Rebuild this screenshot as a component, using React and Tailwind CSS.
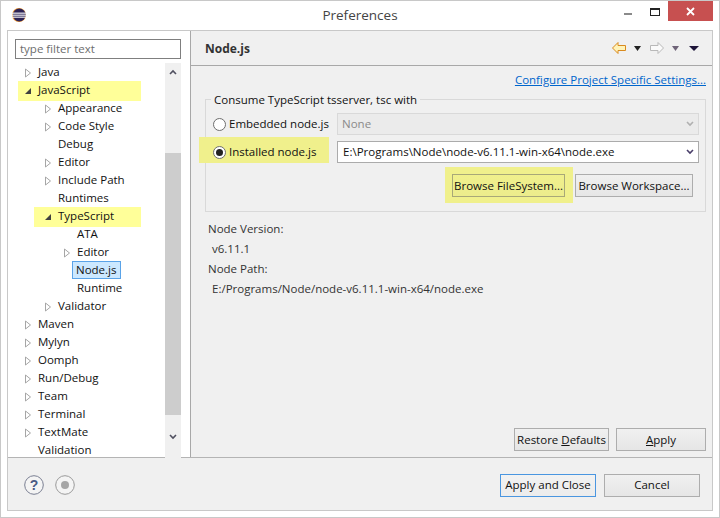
import React from 'react';

const tree = [
  { label: 'Java', depth: 0, arrow: 'closed' },
  { label: 'JavaScript', depth: 0, arrow: 'open', mark: 'w-[123px] left-[10px]' },
  { label: 'Appearance', depth: 1, arrow: 'closed' },
  { label: 'Code Style', depth: 1, arrow: 'closed' },
  { label: 'Debug', depth: 1 },
  { label: 'Editor', depth: 1, arrow: 'closed' },
  { label: 'Include Path', depth: 1, arrow: 'closed' },
  { label: 'Runtimes', depth: 1 },
  { label: 'TypeScript', depth: 1, arrow: 'open', mark: 'w-[107px] left-[26px]' },
  { label: 'ATA', depth: 2 },
  { label: 'Editor', depth: 2, arrow: 'closed' },
  { label: 'Node.js', depth: 2, selected: true },
  { label: 'Runtime', depth: 2 },
  { label: 'Validator', depth: 1, arrow: 'closed' },
  { label: 'Maven', depth: 0, arrow: 'closed' },
  { label: 'Mylyn', depth: 0, arrow: 'closed' },
  { label: 'Oomph', depth: 0, arrow: 'closed' },
  { label: 'Run/Debug', depth: 0, arrow: 'closed' },
  { label: 'Team', depth: 0, arrow: 'closed' },
  { label: 'Terminal', depth: 0, arrow: 'closed' },
  { label: 'TextMate', depth: 0, arrow: 'closed' },
  { label: 'Validation', depth: 0 },
];

const indent = { 0: 'pl-[16px]', 1: 'pl-[36px]', 2: 'pl-[55px]' };

function TreeArrow({ type }) {
  if (type === 'closed') {
    return (
      <svg width="8" height="10" viewBox="0 0 8 10" className="shrink-0">
        <path d="M1.5 1 L6.5 5 L1.5 9 Z" fill="#fff" stroke="#a6a6a6" />
      </svg>
    );
  }
  if (type === 'open') {
    return (
      <svg width="8" height="10" viewBox="0 0 8 10" className="shrink-0">
        <path d="M1 8 L7 8 L7 2 Z" fill="#404040" />
      </svg>
    );
  }
  return <span className="w-2 shrink-0" />;
}

function TreeRow({ item }) {
  return (
    <div className={`relative flex items-center h-[18px] ${indent[item.depth]}`}>
      {item.mark && <span className={`absolute top-[-1px] h-5 bg-[#ffff99] ${item.mark}`} />}
      <span className="relative flex items-center">
        <TreeArrow type={item.arrow} />
      </span>
      <span
        className={
          item.selected
            ? 'relative ml-[1px] h-[18px] pl-[3px] pr-[4px] leading-[16px] bg-[#cce8ff] border border-[#5aa3e8] -translate-y-px'
            : 'relative ml-[6px] leading-[18px] -translate-y-px'
        }
      >
        {item.label}
      </span>
    </div>
  );
}

function Chevron({ up, color = '#505060' }) {
  return (
    <svg width="8" height="6" viewBox="0 0 8 6">
      <path d={up ? 'M1 5 L4 2 L7 5' : 'M1 1 L4 4 L7 1'} fill="none" stroke={color} strokeWidth="1.6" />
    </svg>
  );
}

function EclipseLogo() {
  return (
    <svg width="14" height="14" viewBox="0 0 14 14">
      <circle cx="7" cy="7" r="7" fill="#e8912c" />
      <circle cx="7.3" cy="7" r="6.4" fill="#2c2255" />
      <rect x="0" y="4.6" width="14" height="1.1" fill="#fff" />
      <rect x="0" y="6.6" width="14" height="1.1" fill="#fff" />
      <rect x="0" y="8.6" width="14" height="1.1" fill="#fff" />
    </svg>
  );
}

function NavArrow({ back, disabled }) {
  return (
    <svg width="14" height="12" viewBox="0 0 14 12">
      <path
        d={back ? 'M0.5 6 L6 0.5 V3.5 H13.5 V8.5 H6 V11.5 Z' : 'M13.5 6 L8 0.5 V3.5 H0.5 V8.5 H8 V11.5 Z'}
        fill={disabled ? '#fafafa' : '#fff3b8'}
        stroke={disabled ? '#b8b8b8' : '#d98a1e'}
        strokeLinejoin="round"
      />
    </svg>
  );
}

function SmallTriangle({ color, wide }) {
  return (
    <svg width={wide ? 10 : 7} height="5" viewBox={wide ? '0 0 10 5' : '0 0 7 5'}>
      <path d={wide ? 'M0 0 H10 L5 5 Z' : 'M0 0 H7 L3.5 5 Z'} fill={color} />
    </svg>
  );
}

function Radio({ checked }) {
  return (
    <span className="relative flex items-center justify-center w-[13px] h-[13px] rounded-full border border-[#6e6e6e] bg-white shrink-0">
      {checked && <span className="w-[7px] h-[7px] rounded-full bg-[#222]" />}
    </span>
  );
}

function Button({ className = '', children }) {
  return (
    <div className={`flex items-center justify-center h-[23px] bg-gradient-to-b from-[#f0f0f0] to-[#e6e6e6] border border-[#adadad] ${className}`}>
      {children}
    </div>
  );
}

export default function App() {
  return (
    <div className="relative w-[720px] h-[518px] overflow-hidden bg-white border border-[#c8c8c8] text-[11.5px] text-[#111] font-['Open_Sans','Noto_Sans',sans-serif] flex flex-col">
      {/* title bar */}
      <div className="flex items-start h-[29px] shrink-0">
        <div className="pl-[11px] pt-[7px] w-[240px]">
          <EclipseLogo />
        </div>
        <div className="flex-1 text-center text-[13.5px] text-[#444] pt-[4px] pr-[145px]">Preferences</div>
        <div className="flex items-center h-[20px] shrink-0 mr-[6px]">
          <span className="w-[8px] h-[2px] bg-[#8a8a8a] mr-[18px] mt-[6px]" />
          <span className="w-[10px] h-[8px] border border-t-[2px] border-[#222] mr-[8px] box-border mt-[2px]" />
          <div className="flex items-center justify-center w-[45px] h-[20px] bg-[#c75050]">
            <svg width="9" height="9" viewBox="0 0 9 9">
              <path d="M1 1 L8 8 M8 1 L1 8" stroke="#fff" strokeWidth="1.8" />
            </svg>
          </div>
        </div>
      </div>

      {/* dialog body */}
      <div className="mx-[6px] h-[481px] border border-[#c8c8c8] flex flex-col bg-[#f0f0f0]">
        <div className="flex h-[427px] border-b border-[#b4b4b4]">
          {/* left tree */}
          <div className="w-[183px] bg-white border-r border-[#a8a8a8] shrink-0 flex flex-col">
            <div className="pt-[8px] pl-[7px]">
              <div className="w-[166px] h-[20px] border border-[#7f7f7f] pl-[4px] leading-[18px] text-[#6d6d6d]">type filter text</div>
            </div>
            <div className="flex mt-[4px]">
              <div className="w-[157px] overflow-hidden pt-[1px] h-[395px]">
                {tree.map((item, i) => (
                  <TreeRow key={i} item={item} />
                ))}
              </div>
              <div className="w-[16px] h-[395px] bg-[#f0f0f0] flex flex-col items-center">
                <div className="h-[18px] flex items-center"><Chevron up /></div>
                <div className="w-full h-[72px]" />
                <div className="w-full h-[262px] bg-[#cdcdcd]" />
                <div className="flex-1 flex items-center"><Chevron /></div>
              </div>
            </div>
          </div>

          {/* right panel */}
          <div className="flex-1 flex flex-col min-w-0">
            <div className="flex items-center h-[35px] border-b border-[#a8a8a8] pl-[14px] pr-[13px]">
              <span className="font-bold text-[12px] text-[#333] flex-1 pt-[2px]">Node.js</span>
              <NavArrow back />
              <span className="ml-[8px] mr-[9px]"><SmallTriangle color="#222" /></span>
              <NavArrow disabled />
              <span className="ml-[8px] mr-[10px]"><SmallTriangle color="#6f6478" /></span>
              <SmallTriangle color="#1d1438" wide />
            </div>

            <div className="flex-1 flex flex-col pl-[14px] pr-[6px] bg-[#f0f0f0]">
              <div className="text-right text-[#0066cc] underline leading-[16px] pt-[6px] h-[33px]">Configure Project Specific Settings...</div>

              {/* group */}
              <div className="relative w-[501px] h-[113px] border border-[#d9d9d9]">
                <span className="absolute left-[5px] top-[-8px] px-[3px] bg-[#f0f0f0] leading-[16px]">Consume TypeScript tsserver, tsc with</span>
                <div className="flex items-center h-[24px] mt-[12px] pl-[7px]">
                  <Radio />
                  <span className="ml-[3px] w-[108px]">Embedded node.js</span>
                  <div className="absolute left-[131px] top-[13px] w-[362px] h-[22px] border border-[#d9d9d9] bg-[#ebebeb] flex items-center justify-between pl-[4px] pr-[4px] text-[#8a8a8a]">
                    None
                    <Chevron color="#b0b0b0" />
                  </div>
                </div>
                <div className="relative flex items-center h-[24px] mt-[4px] pl-[7px]">
                  <span className="absolute left-[-7px] top-[-3px] w-[130px] h-[26px] bg-[#f0f08c]" />
                  <span className="relative"><Radio checked /></span>
                  <span className="relative ml-[3px]">Installed node.js</span>
                  <div className="absolute left-[131px] top-[1px] w-[362px] h-[22px] border border-[#ababab] bg-white flex items-center justify-between pl-[5px] pr-[4px]">
                    E:\Programs\Node\node-v6.11.1-win-x64\node.exe
                    <Chevron color="#4a3f6a" />
                  </div>
                </div>
                <div className="relative flex justify-end gap-[10px] mt-[10px] pr-[12px]">
                  <span className="absolute left-[239px] top-[-7px] w-[128px] h-[36px] bg-[#f0f08c]" />
                  <Button className="relative w-[113px] !from-[#f0f08c] !to-[#ecec8c] !border-[#a8a878]">Browse FileSystem...</Button>
                  <Button className="relative w-[118px]">Browse Workspace...</Button>
                </div>
              </div>

              <div className="pl-[3px] pt-[7px] leading-[20px] text-[#333]">
                <div>Node Version:</div>
                <div className="pl-[4px]">v6.11.1</div>
                <div>Node Path:</div>
                <div className="pl-[4px]">E:/Programs/Node/node-v6.11.1-win-x64/node.exe</div>
              </div>

              <div className="flex-1" />
              <div className="flex justify-end gap-[7px] pb-[6px]">
                <Button className="w-[95px]"><span>Restore <span className="underline">D</span>efaults</span></Button>
                <Button className="w-[90px]"><span><span className="underline">A</span>pply</span></Button>
              </div>
            </div>
          </div>
        </div>

        {/* bottom bar */}
        <div className="flex items-center flex-1 pl-[16px] pr-[12px] pt-[2px]">
          <svg width="20" height="20" viewBox="0 0 20 20">
            <circle cx="10" cy="10" r="9.3" fill="#f4f4f4" stroke="#7a7f92" />
            <text x="10" y="15" textAnchor="middle" fontSize="14" fontWeight="700" fill="#4a5a85" fontFamily="'Liberation Sans', sans-serif">?</text>
          </svg>
          <svg width="20" height="20" viewBox="0 0 20 20" className="ml-[11px]">
            <circle cx="10" cy="10" r="9.3" fill="#f4f4f4" stroke="#9a9a9a" />
            <circle cx="10" cy="10" r="4" fill="#a6a6a6" />
          </svg>
          <div className="flex-1" />
          <Button className="w-[96px] !border-[#4a96e0] !from-[#f2f2f2] !to-[#ececec]">Apply and Close</Button>
          <Button className="w-[96px] ml-[8px]">Cancel</Button>
        </div>
      </div>
    </div>
  );
}
